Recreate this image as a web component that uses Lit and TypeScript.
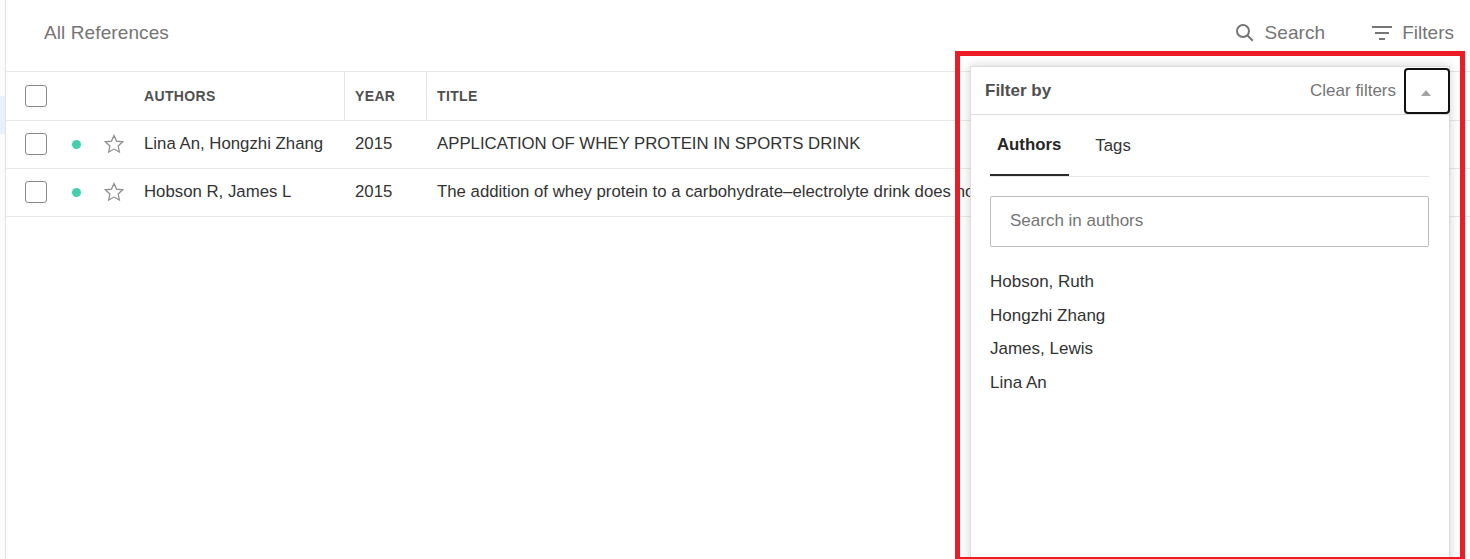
import { LitElement, html, css } from "lit";
import { customElement } from "lit/decorators.js";

const star = html`<svg class="star" width="20" height="20" viewBox="0 0 20 20"><path d="M10 1.4l2.5 5.7 6.2.7-4.6 4.2 1.3 6.1L10 15.1l-5.4 3 1.3-6.1L1.3 7.8l6.2-.7z" fill="none" stroke="#8c8c8c" stroke-width="1.2"/></svg>`;

const rows = [
  { authors: "Lina An, Hongzhi Zhang", year: "2015", title: "APPLICATION OF WHEY PROTEIN IN SPORTS DRINK" },
  { authors: "Hobson R, James L", year: "2015", title: "The addition of whey protein to a carbohydrate–electrolyte drink does not influence post-exercise rehydration" },
];

@customElement("app-root")
export class AppRoot extends LitElement {
  static styles = css`
    :host {
      display: block;
      position: relative;
      width: 1470px;
      height: 559px;
      overflow: hidden;
      background: #fff;
      font-family: "Liberation Sans", Arial, sans-serif;
      color: #333;
      font-size: 16.8px;
    }
    .page { display: flex; height: 559px; }
    .side { width: 5px; flex: none; background: #fbfbfb; border-right: 1px solid #e3e3e3; padding-top: 96px; }
    .side i { display: block; height: 38px; background: #e8f0fb; }
    .main { flex: 1; min-width: 0; }
    .top {
      height: 72px;
      box-sizing: border-box;
      padding: 0 16px 6px 38px;
      display: flex;
      align-items: center;
      border-bottom: 1px solid #e6e6e6;
      color: #757575;
      font-size: 19px;
    }
    .crumb { flex: 1; letter-spacing: .1px; }
    .tool { display: flex; align-items: center; gap: 10px; letter-spacing: .1px; }
    .tool + .tool { margin-left: 47px; letter-spacing: 0; }
    .row {
      display: grid;
      grid-template-columns: 339px 82px 1fr;
      height: 48px;
      box-sizing: border-box;
      border-bottom: 1px solid #e6e6e6;
      padding-bottom: 1px;
      white-space: nowrap;
    }
    .row.head { height: 49px; padding-bottom: 0; }
    .cell { display: flex; align-items: center; min-width: 0; }
    .first { display: flex; align-items: center; box-sizing: border-box; }
    .cb {
      width: 22px; height: 22px; box-sizing: border-box;
      border: 1px solid #8a8a8a; border-radius: 3px;
      margin-left: 19px; flex: none;
    }
    .dot { width: 9px; height: 9px; border-radius: 50%; background: #43d0ae; margin-left: 25px; flex: none; }
    .star { margin-left: 23px; margin-top: -1px; flex: none; }
    .auth { margin-left: 20px; }
    .year { padding-left: 10px; }
    .title { padding-left: 10px; }
    .head { font-size: 14px; font-weight: 700; color: #4f4f4f; letter-spacing: .35px; }
    .head .first, .head .year { border-right: 1px solid #e6e6e6; }
    .head .year { box-sizing: border-box; }
    .head .authh { margin-left: 97px; }
    .frame {
      position: absolute; left: 955px; top: 51px;
      width: 510px; height: 511px; box-sizing: border-box;
      border: 5px solid #ed1c24;
      pointer-events: none; z-index: 2;
    }
    .panel {
      position: absolute; left: 970px; top: 66px;
      width: 480px; height: 500px; box-sizing: border-box;
      background: #fff;
      border: 1px solid #dcdcdc;
      box-shadow: 0 0 10px rgba(0,0,0,.18);
      z-index: 1;
      font-size: 17px;
    }
    .ph {
      height: 48px; box-sizing: border-box;
      display: flex; align-items: center;
      border-bottom: 1px solid #dcdcdc;
      padding-left: 14px;
    }
    .ph b { flex: 1; color: #4f4f4f; }
    .clear { color: #757575; margin-right: 8px; }
    .toggle {
      width: 46px; height: 46px; box-sizing: border-box;
      border: 2px solid #111; border-radius: 4px;
      display: flex; align-items: center; justify-content: center;
      align-self: flex-start; margin-top: 1px; margin-right: -1px;
      background: #fff;
    }
    .tri { width: 0; height: 0; border-left: 5px solid transparent; border-right: 5px solid transparent; border-bottom: 6px solid #a3a3a3; margin: 3px 2px 0 0; }
    .body { padding: 0 20px 0 19px; }
    .tabs { display: flex; border-bottom: 1px solid #e6e6e6; height: 62px; box-sizing: border-box; font-size: 16.8px; }
    .tab { display: flex; align-items: center; padding: 0 8px 0 7px; height: 61px; box-sizing: border-box; }
    .tab.on { font-weight: 700; border-bottom: 2px solid #2b2b2b; color: #262626; }
    .tab + .tab { margin-left: 19px; }
    .search {
      margin-top: 19px; height: 51px; box-sizing: border-box;
      border: 1px solid #bcbcbc; border-radius: 2px;
      display: flex; align-items: center; padding: 0 0 2px 19px;
      color: #757575;
    }
    .list { margin-top: 18.4px; display: flex; flex-direction: column; }
    .list div { height: 33.6px; display: flex; align-items: center; }
  `;

  render() {
    return html`
      <div class="page">
        <div class="side"><i></i></div>
        <div class="main">
          <div class="top">
            <div class="crumb">All References</div>
            <div class="tool">
              <svg width="19" height="19" viewBox="0 0 19 19" fill="none" stroke="#757575" stroke-width="2"><circle cx="8" cy="8" r="6"/><path d="M12.5 12.5l5.3 5.3"/></svg>
              Search
            </div>
            <div class="tool">
              <svg width="20" height="14" viewBox="0 0 20 14" fill="#757575"><rect x="0" y="0" width="20" height="2"/><rect x="3" y="6" width="14" height="2"/><rect x="7" y="12" width="6" height="2"/></svg>
              Filters
            </div>
          </div>
          <div class="row head">
            <div class="first cell"><span class="cb"></span><span class="authh">AUTHORS</span></div>
            <div class="cell year">YEAR</div>
            <div class="cell title">TITLE</div>
          </div>
          ${rows.map(
            (r) => html`<div class="row">
              <div class="first"><span class="cb"></span><span class="dot"></span>${star}<span class="auth">${r.authors}</span></div>
              <div class="cell year">${r.year}</div>
              <div class="cell title">${r.title}</div>
            </div>`
          )}
        </div>
      </div>
      <div class="panel">
        <div class="ph">
          <b>Filter by</b>
          <span class="clear">Clear filters</span>
          <span class="toggle"><span class="tri"></span></span>
        </div>
        <div class="body">
          <div class="tabs">
            <div class="tab on">Authors</div>
            <div class="tab">Tags</div>
          </div>
          <div class="search">Search in authors</div>
          <div class="list">
            <div>Hobson, Ruth</div>
            <div>Hongzhi Zhang</div>
            <div>James, Lewis</div>
            <div>Lina An</div>
          </div>
        </div>
      </div>
      <div class="frame"></div>
    `;
  }
}
